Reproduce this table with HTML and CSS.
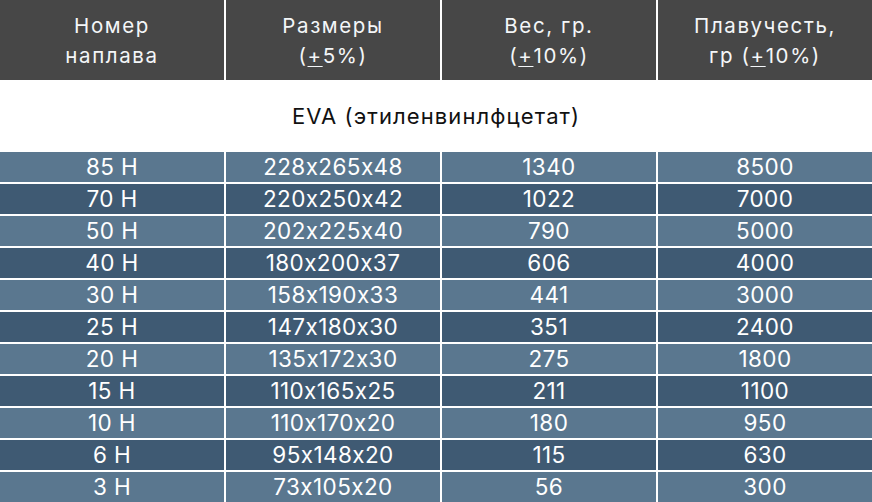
FILE: index.html
```html
<!DOCTYPE html>
<html lang="ru">
<head>
<meta charset="utf-8">
<link rel="stylesheet" href="styles.css">
</head>
<body>
<div class="table">
  <div class="row head">
    <div class="cell"><span>Номер<br>наплава</span></div>
    <div class="cell"><span>Размеры<br>(<u>+</u>5%)</span></div>
    <div class="cell"><span>Вес, гр.<br>(<u>+</u>10%)</span></div>
    <div class="cell"><span>Плавучесть,<br>гр (<u>+</u>10%)</span></div>
  </div>
  <div class="section">EVA (этиленвинлфцетат)</div>
  <div class="row light"><div class="cell">85 Н</div><div class="cell">228x265x48</div><div class="cell">1340</div><div class="cell">8500</div></div>
  <div class="row dark"><div class="cell">70 Н</div><div class="cell">220x250x42</div><div class="cell">1022</div><div class="cell">7000</div></div>
  <div class="row light"><div class="cell">50 Н</div><div class="cell">202x225x40</div><div class="cell">790</div><div class="cell">5000</div></div>
  <div class="row dark"><div class="cell">40 Н</div><div class="cell">180x200x37</div><div class="cell">606</div><div class="cell">4000</div></div>
  <div class="row light"><div class="cell">30 Н</div><div class="cell">158x190x33</div><div class="cell">441</div><div class="cell">3000</div></div>
  <div class="row dark"><div class="cell">25 Н</div><div class="cell">147x180x30</div><div class="cell">351</div><div class="cell">2400</div></div>
  <div class="row light"><div class="cell">20 Н</div><div class="cell">135x172x30</div><div class="cell">275</div><div class="cell">1800</div></div>
  <div class="row dark"><div class="cell">15 Н</div><div class="cell">110x165x25</div><div class="cell">211</div><div class="cell">1100</div></div>
  <div class="row light"><div class="cell">10 Н</div><div class="cell">110x170x20</div><div class="cell">180</div><div class="cell">950</div></div>
  <div class="row dark"><div class="cell">6 Н</div><div class="cell">95x148x20</div><div class="cell">115</div><div class="cell">630</div></div>
  <div class="row light"><div class="cell">3 Н</div><div class="cell">73x105x20</div><div class="cell">56</div><div class="cell">300</div></div>
</div>
</body>
</html>
```
FILE: styles.css
```css
html, body {
  margin: 0;
  padding: 0;
  background: #ffffff;
}
body {
  font-family: Inter, Roboto, sans-serif;
  font-feature-settings: "calt" 0;
  overflow: hidden;
}
.table {
  display: flex;
  flex-direction: column;
  width: 872px;
}
.row {
  display: grid;
  grid-template-columns: 224px 214px 214px 214px;
  column-gap: 2px;
  margin-bottom: 2px;
}
.row .cell {
  display: flex;
  align-items: center;
  justify-content: center;
  text-align: center;
  color: #ffffff;
}
.head {
  margin-bottom: 0;
}
.head .cell {
  height: 80px;
  background: #474747;
  font-size: 20.5px;
  line-height: 30px;
  letter-spacing: 1.6px;
  color: #f4f6f8;
}
.head .cell span {
  display: block;
  margin-top: 2px;
}
.head u {
  text-decoration-thickness: 1px;
  text-underline-offset: 3px;
}
.section {
  height: 72px;
  display: flex;
  align-items: center;
  justify-content: center;
  font-size: 22px;
  letter-spacing: 1.1px;
  color: #111111;
}
.light .cell,
.dark .cell {
  height: 30px;
  font-size: 22.5px;
  line-height: 30px;
  letter-spacing: 0.4px;
}
.light .cell {
  background: #5a778f;
}
.dark .cell {
  background: #3f5a73;
}
```
